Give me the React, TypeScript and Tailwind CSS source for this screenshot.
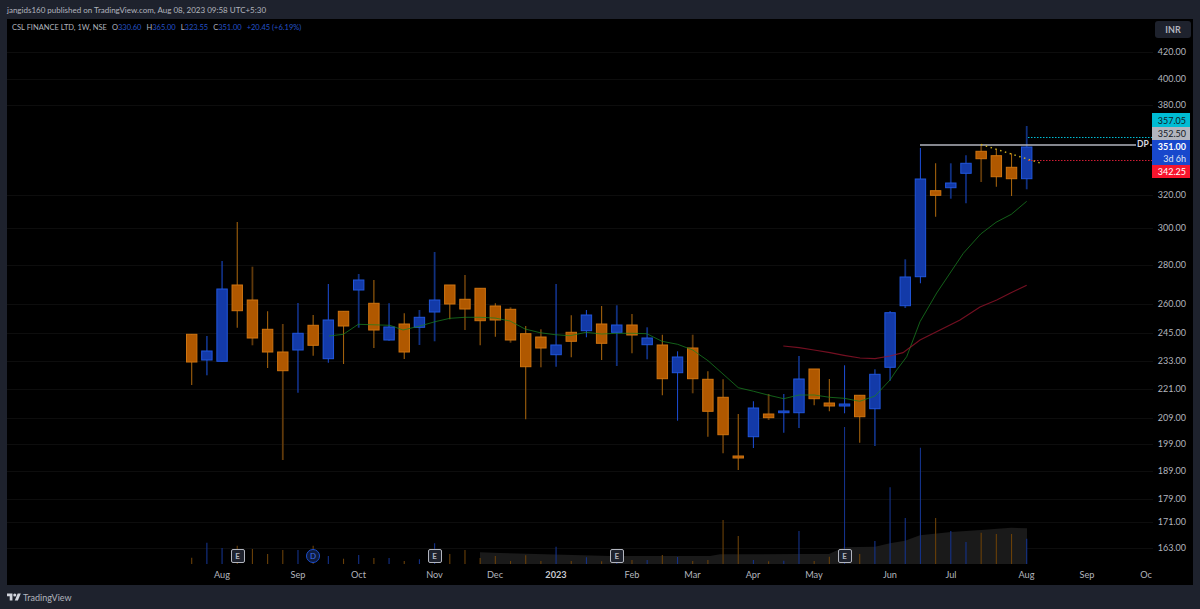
import React from "react";

type C = [number, number, number, number, "b" | "o", number, number];
// high, bodyTop, bodyBottom, low, colour, dim wick (0/1), volume top
const candles: C[] = [
  [334, 334.3, 362, 385, "o", 0, 557.7],
  [336, 351, 360, 375.3, "b", 1, 542.7],
  [261, 289, 361.3, 361.7, "b", 0, 548],
  [222, 285, 310.7, 327.7, "o", 0, 545.7],
  [266.7, 300, 338, 345.3, "o", 1, 549],
  [311.3, 329.3, 352, 368, "o", 0, 554],
  [324, 352, 370.7, 460, "o", 1, 550],
  [303, 333.3, 350, 392.7, "b", 0, 550],
  [315, 325.3, 345.3, 355.7, "o", 0, 545.7],
  [284, 320, 358.7, 362.7, "b", 0, 556],
  [311.3, 311.3, 326, 364, "o", 0, 558.7],
  [274, 280, 290, 327.7, "b", 1, 555],
  [280, 303.3, 330, 348, "o", 0, 558],
  [303.3, 327, 340, 340.7, "b", 1, 558],
  [313.3, 324, 352, 359, "o", 0, 561],
  [310, 317.3, 327.3, 345, "b", 1, 559.3],
  [252, 300, 312, 341.3, "b", 1, 543.3],
  [285, 285, 304, 319.3, "o", 0, 554],
  [275, 299.3, 309, 330, "o", 1, 550],
  [288.3, 288.3, 320.7, 345.3, "o", 0, 558],
  [303.3, 306, 320, 336.7, "o", 0, 556],
  [307.3, 309.3, 340, 342.7, "o", 1, 561],
  [326, 333.7, 366.7, 419.3, "o", 0, 555.3],
  [329.3, 337, 348, 367.3, "o", 1, 561],
  [284, 345, 354.7, 366.7, "b", 0, 546.7],
  [315.3, 332.3, 341.3, 357.3, "o", 0, 561],
  [310, 315, 330.7, 337.3, "b", 0, 557.3],
  [306, 324, 343.3, 360, "o", 0, 561.3],
  [305.3, 325, 332.3, 366, "b", 1, 556],
  [314, 325, 335, 353.3, "o", 0, 560],
  [327.3, 338, 344.7, 359.3, "b", 1, 560],
  [334.7, 345, 378.7, 395.3, "o", 0, 555],
  [351.3, 357, 372.7, 420.7, "b", 0, 557],
  [334.7, 348, 378.7, 393.3, "o", 1, 561],
  [371.3, 379.3, 411.3, 436.7, "o", 0, 560],
  [379.3, 397.3, 434.7, 453.3, "o", 1, 520],
  [414, 456, 458, 470, "o", 0, 536],
  [401.3, 408, 436.7, 448, "b", 0, 560],
  [394, 414, 417.7, 420, "o", 1, 561.3],
  [394, 411, 412.7, 432.7, "b", 0, 560.7],
  [356, 379, 412.7, 428, "b", 1, 531],
  [369, 369, 398.7, 405.3, "o", 0, 561],
  [379, 403, 406, 411.3, "o", 0, 556.7],
  [365.3, 404, 406, 413.3, "b", 0, 427],
  [395, 395.3, 416.7, 442.7, "o", 0, 554],
  [369.3, 374.3, 408.7, 446, "b", 1, 541],
  [311, 312.7, 367.3, 380.7, "b", 0, 487.3],
  [259.3, 277, 305.7, 308, "b", 1, 518],
  [148, 179, 276.7, 283.3, "b", 0, 447.7],
  [163.3, 190.7, 195.3, 216.7, "o", 0, 518],
  [163.3, 183, 187.7, 198.7, "b", 1, 531],
  [155.3, 163.3, 173.3, 203.3, "b", 0, 542],
  [144, 151.3, 158.7, 182, "o", 1, 532.7],
  [149.3, 155.7, 176.7, 186.7, "o", 0, 534],
  [153.3, 167.3, 178.7, 196, "o", 0, 534],
  [126, 147, 178.7, 189.3, "b", 1, 538.7],
];

const xAt = (i: number) => 191.7 + 15.182 * i;

const green =
  "329,336 343.3,334.3 358.3,324.3 390,325.3 403,330 420,326 435,321.7 450,318.3 465,317.3 480,317.3 495,318 510,321 525,329 540,332.7 555,334.7 570,335.7 586,332.3 601.7,334 616.7,333.3 632,333.3 646.7,333.7 662,341.3 677.7,344.3 692.7,350 708,360.7 723,374 738.3,387.7 753.7,391.3 769,395.3 783.7,398.7 799,395 814.3,395 829.7,397.3 844.3,398.3 859.7,401.3 875,396 890,380 896.7,370 906.7,356.7 920,321.7 936.7,293 963.3,253.3 980.7,234 996,222.3 1011.3,214.3 1026.7,201.3";
const red =
  "783.3,346 799,347.7 814,350 830,352.7 844,355.3 860,358 875,358.7 890,356 903,352.7 920,340 940,330 960,320 980,307 996.7,300 1011,292.7 1026.7,285.3";
const areaTop =
  "480,552.3 500,553 610,556 710,556 720,554.3 800,554 829,554 844,547.3 875,546.7 890,543.3 905,540.7 920,535.3 951,532 981,530 1011,527.7 1027,528.3";

const prices: [string, number][] = [
  ["420.00", 52], ["400.00", 79], ["380.00", 105], ["320.00", 195], ["300.00", 228],
  ["280.00", 265], ["260.00", 304], ["245.00", 333], ["233.00", 361], ["221.00", 389],
  ["209.00", 418], ["199.00", 444], ["189.00", 471], ["179.00", 499], ["171.00", 522], ["163.00", 548],
];

const months: [string, number][] = [
  ["Aug", 222], ["Sep", 298], ["Oct", 358.5], ["Nov", 434.5], ["Dec", 495], ["2023", 556],
  ["Feb", 632], ["Mar", 692.5], ["Apr", 753], ["May", 814], ["Jun", 890], ["Jul", 951],
  ["Aug", 1026.5], ["Sep", 1087], ["Oc", 1146],
];

const font = "[font-family:'Lato','Noto_Sans',sans-serif]";

function Badge({ x, round, label }: { x: number; round?: boolean; label: string }) {
  return (
    <div
      style={{ left: x - 7 }}
      className={
        round
          ? "absolute top-[549px] flex h-[14px] w-[14px] items-center justify-center rounded-full border-[1.5px] border-[#1c4fd0] bg-[#0d1a3c] text-[8px] leading-none text-[#3d6ee8]"
          : "absolute top-[549px] flex h-[14px] w-[14px] items-center justify-center rounded-[2px] border-[1.5px] border-[#b2b5be] bg-[#1e222d] text-[8px] font-bold leading-none text-[#b2b5be]"
      }
    >
      {label}
    </div>
  );
}

function Chart() {
  return (
    <svg width={1146} height={547} viewBox="7 19 1146 547" className="block shrink-0">
      {prices.map(([p, y]) => (
        <line key={p} x1={7} x2={1153} y1={y + 0.5} y2={y + 0.5} stroke="#0d0d0d" strokeWidth={1} />
      ))}
      <polygon points={`${areaTop} 1027,564 480,564`} fill="#1a1a1a" />
      {candles.map((c, i) => (
        <line
          key={i}
          x1={xAt(i)}
          x2={xAt(i)}
          y1={c[6]}
          y2={564}
          stroke={c[4] === "b" ? "#14328a" : "#6a4008"}
          strokeWidth={1.1}
        />
      ))}
      {candles.map((c, i) => {
        const x = xAt(i);
        const blue = c[4] === "b";
        const dim = c[5] === 1;
        const wick = blue ? (dim ? "#10307f" : "#1a48c8") : dim ? "#60390a" : "#a0600c";
        return (
          <g key={i}>
            <line x1={x} x2={x} y1={c[0]} y2={c[3]} stroke={wick} strokeWidth={dim ? 1.8 : 1.1} />
            <rect
              x={x - 5.2}
              y={c[1]}
              width={10.4}
              height={Math.max(c[2] - c[1], 1.5)}
              fill={blue ? "#133aa8" : "#b05800"}
              stroke={blue ? "#2156dc" : "#cf7410"}
              strokeWidth={1}
            />
          </g>
        );
      })}
      <polyline points={green} fill="none" stroke="#1a8022" strokeOpacity={0.75} strokeWidth={1} />
      <polyline points={red} fill="none" stroke="#9a142c" strokeOpacity={0.75} strokeWidth={1.2} />
      <line x1={1028} x2={1153} y1={137.5} y2={137.5} stroke="#00bcd4" strokeWidth={1.2} strokeDasharray="1.5 1.5" />
      <line x1={1028} x2={1153} y1={160.5} y2={160.5} stroke="#d01c34" strokeWidth={1.2} strokeDasharray="1.5 1.5" />
      <line x1={920} x2={1136} y1={145} y2={145} stroke="#b2b5be" strokeWidth={1.5} />
      <line x1={1150} x2={1153} y1={145} y2={145} stroke="#b2b5be" strokeWidth={1.5} />
      <line x1={981} x2={1040} y1={144.5} y2={163} stroke="#d0b020" strokeWidth={1.4} strokeDasharray="1.5 3.5" />
    </svg>
  );
}

export default function App() {
  return (
    <div className={`flex h-[609px] w-[1200px] flex-col overflow-hidden bg-[#1e222d] text-[#b2b5be] ${font}`}>
      <div className="flex h-[19px] shrink-0 items-center pl-[7px] text-[8px] leading-none">
        jangids160 published on TradingView.com, Aug 08, 2023 09:58 UTC+5:30
      </div>

      <div className="relative mx-[7px] flex h-[566px] shrink-0 flex-col bg-black">
        <div className="absolute left-[5px] top-[4px] z-10 flex gap-[5px] text-[7.5px] leading-[10px]">
          <span>CSL FINANCE LTD, 1W, NSE</span>
          <span>O<span className="text-[#2452c8]">330.60</span></span>
          <span>H<span className="text-[#2452c8]">365.00</span></span>
          <span>L<span className="text-[#2452c8]">323.55</span></span>
          <span>C<span className="text-[#2452c8]">351.00</span></span>
          <span className="text-[#2452c8]">+20.45 (+6.19%)</span>
        </div>

        <div className="flex h-[547px] shrink-0">
          <Chart />
          <div className="relative flex-1 text-[9px] leading-none">
            {prices.map(([p, y]) => (
              <div key={p} style={{ top: y - 19 - 5 }} className="absolute right-[7px] text-[#b2b5be]">
                {p}
              </div>
            ))}
            <div className="absolute left-[2px] top-[2px] flex h-[17px] w-[36px] items-center justify-center rounded-[3px] bg-[#1e222d] text-[9px] font-bold text-[#b2b5be]">
              INR
            </div>
            <div className="absolute left-[-1px] top-[94px] flex w-[38px] flex-col text-[9px] leading-none">
              <div className="flex h-[14px] items-center justify-end bg-[#00bcd4] pr-[4px] text-[#131722]">357.05</div>
              <div className="flex h-[13px] items-center justify-end bg-[#b2b5be] pr-[4px] text-[#131722]">352.50</div>
              <div className="flex h-[25px] flex-col items-end justify-center gap-[3px] bg-[#1848cc] pr-[4px] text-white">
                <span className="font-bold">351.00</span>
                <span className="text-[#dfe5f5]">3d 6h</span>
              </div>
              <div className="flex h-[13px] items-center justify-end bg-[#f7152d] pr-[4px] text-white">342.25</div>
            </div>
          </div>
        </div>

        <div className="relative h-[19px] w-[1146px] shrink-0 text-[9.2px] leading-none">
          {months.map(([m, x]) => (
            <div
              key={m + x}
              style={{ left: x - 7 - 20 }}
              className={
                m === "2023"
                  ? "absolute top-[4px] w-[40px] text-center font-bold text-[#c8cad0]"
                  : "absolute top-[4px] w-[40px] text-center text-[#b2b5be]"
              }
            >
              {m}
            </div>
          ))}
        </div>

        <div className="absolute left-[-7px] top-[-19px] h-0 w-0">
          <Badge x={237.5} label="E" />
          <Badge x={313} round label="D" />
          <Badge x={434.6} label="E" />
          <Badge x={616.8} label="E" />
          <Badge x={844.5} label="E" />
          <div className="absolute left-[1136px] top-[138px] bg-black px-[1px] text-[8.5px] font-bold leading-[13px] text-[#d8dae0]">
            DP
          </div>
        </div>
      </div>

      <div className="flex flex-1 items-center gap-[2px] pl-[7px] text-[9px] leading-none">
        <svg width={14} height={8} viewBox="0 4 36 18" fill="#d1d4dc" className="shrink-0">
          <path d="M14 22H7V11H0V4h14v18ZM28 22h-8l7.5-18h8L28 22Z" />
          <circle cx={20} cy={8} r={4} />
        </svg>
        <span className="text-[#b2b5be]">TradingView</span>
      </div>
    </div>
  );
}
